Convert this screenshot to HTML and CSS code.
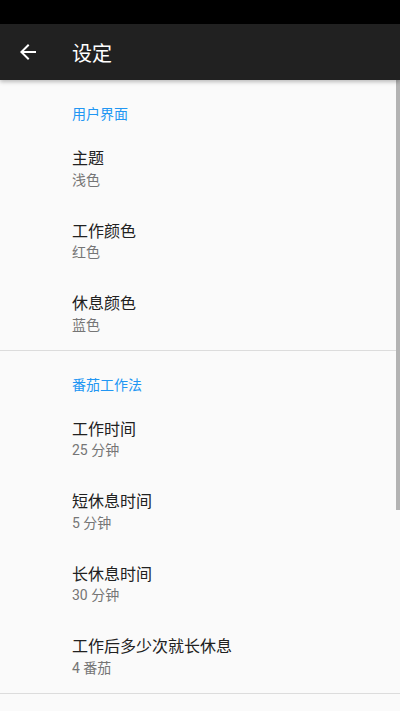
FILE: index.html
```html
<!DOCTYPE html>
<html lang="zh-CN">
<head>
  <meta charset="UTF-8" />
  <meta name="viewport" content="width=device-width, initial-scale=1.0"/>
  <title>设定</title>
  <link rel="stylesheet" href="styles.css">
</head>
<body>
  <div class="status-bar"></div>

  <header class="toolbar">
    <button class="back-btn" aria-label="返回">
      <svg viewBox="0 0 24 24" width="24" height="24">
        <path fill="#fff" d="M20 11H7.83l5.59-5.59L12 4l-8 8 8 8 1.41-1.41L7.83 13H20v-2z"/>
      </svg>
    </button>
    <h1>设定</h1>
  </header>

  <main class="settings">
    <section class="group">
      <h2 class="group-title">用户界面</h2>
      <div class="pref">
        <div class="pref-title">主题</div>
        <div class="pref-summary">浅色</div>
      </div>
      <div class="pref">
        <div class="pref-title">工作颜色</div>
        <div class="pref-summary">红色</div>
      </div>
      <div class="pref">
        <div class="pref-title">休息颜色</div>
        <div class="pref-summary">蓝色</div>
      </div>
    </section>

    <section class="group">
      <h2 class="group-title">番茄工作法</h2>
      <div class="pref">
        <div class="pref-title">工作时间</div>
        <div class="pref-summary">25 分钟</div>
      </div>
      <div class="pref">
        <div class="pref-title">短休息时间</div>
        <div class="pref-summary">5 分钟</div>
      </div>
      <div class="pref">
        <div class="pref-title">长休息时间</div>
        <div class="pref-summary">30 分钟</div>
      </div>
      <div class="pref">
        <div class="pref-title">工作后多少次就长休息</div>
        <div class="pref-summary">4 番茄</div>
      </div>
    </section>

    <div class="scroll-thumb"></div>
  </main>
</body>
</html>
```

FILE: styles.css
```css
body {
  margin: 0;
  font-family: Roboto, "Noto Sans CJK SC", sans-serif;
  background: #fafafa;
  color: #212121;
  height: 711px;
  overflow: hidden;
}

.status-bar {
  height: 24px;
  background: #000;
}

.toolbar {
  height: 56px;
  background: #212121;
  display: flex;
  align-items: center;
  box-shadow: 0 2px 4px rgba(0,0,0,0.25);
  position: relative;
  z-index: 2;
}

.back-btn {
  width: 56px;
  height: 56px;
  padding: 0 0 0 16px;
  background: none;
  border: none;
  display: flex;
  align-items: center;
}

.toolbar h1 {
  margin: 0 0 0 16px;
  color: #fff;
  font-size: 20px;
  font-weight: normal;
}

.settings {
  position: relative;
}

.group {
  border-bottom: 1px solid #dcdcdc;
}

.group-title {
  margin: 0;
  padding: 24px 16px 8px 72px;
  font-size: 14px;
  line-height: 20px;
  font-weight: normal;
  color: #2196f3;
}

.pref {
  padding: 17px 16px 15px 72px;
}

.pref-title {
  font-size: 16px;
  line-height: 20.5px;
}

.pref-summary {
  font-size: 14px;
  line-height: 20px;
  color: #757575;
}

.scroll-thumb {
  position: absolute;
  top: 0;
  right: 0;
  width: 4px;
  height: 430px;
  background: #b3b3b3;
}
```
